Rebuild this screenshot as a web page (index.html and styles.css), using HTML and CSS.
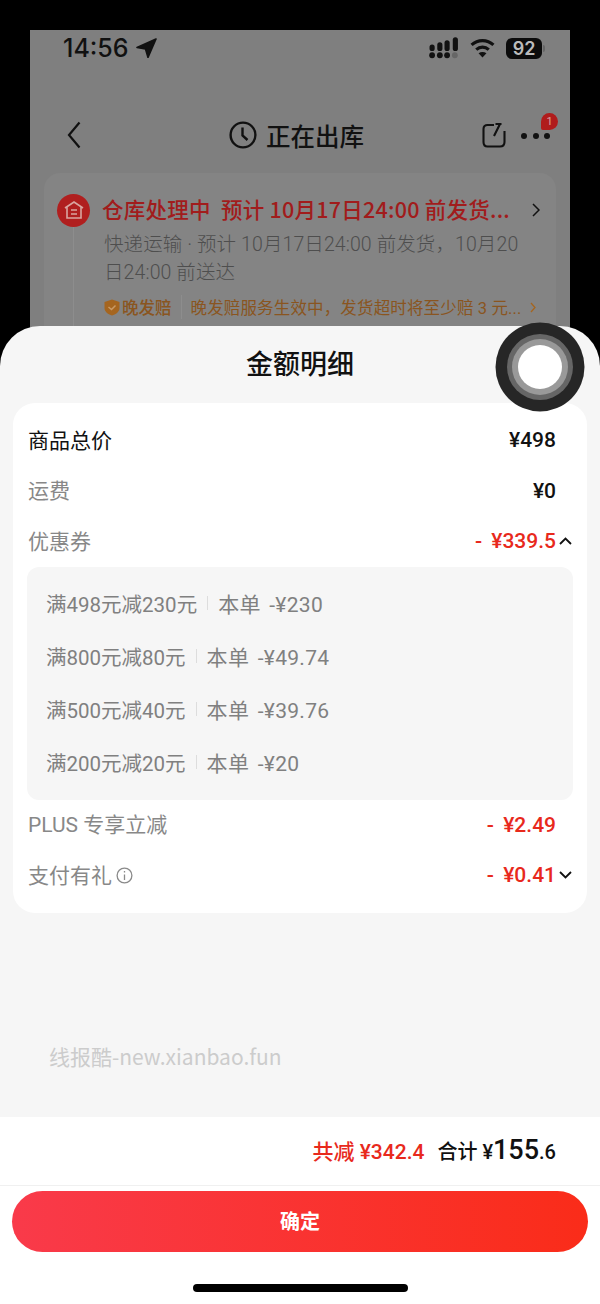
FILE: index.html

```html
<!DOCTYPE html>
<html lang="zh-CN">
<head>
    <meta charset="UTF-8" />
    <meta name="viewport" content="width=device-width, initial-scale=1" />
    <title>金额明细</title>
    <link rel="stylesheet" href="styles.css">
</head>
<body>
    <div class="page">
        <div class="backdrop">
            <div class="status-bar">
                <div class="status-time">
                    <span>14:56</span>
                    <svg width="21" height="20" viewBox="0 0 21 20"><path d="M20 1 L1 9.5 L9.5 11 L12 19.5 Z" fill="#111" stroke="#111" stroke-width="1.6" stroke-linejoin="round"/></svg>
                </div>
                <div class="status-icons">
                    <svg width="31" height="22" viewBox="0 0 30 21">
                        <g fill="#111">
                            <circle cx="3" cy="17.5" r="2.8"/><circle cx="10.5" cy="17.5" r="2.8"/><circle cx="17.5" cy="17.5" r="2.8"/>
                            <rect x="0.5" y="7" width="5" height="6.5" rx="2.5"/><rect x="8" y="5" width="5" height="8.5" rx="2.5"/><rect x="15" y="3" width="5" height="10.5" rx="2.5"/><rect x="23" y="0" width="5" height="13.5" rx="2.5"/>
                        </g>
                        <circle cx="25" cy="17.5" r="2.8" fill="#666"/>
                    </svg>
                    <svg class="wifi" width="25" height="20" viewBox="0 0 24 19" fill="none" stroke="#111" stroke-width="3">
                        <path d="M1.5 6.5 C7.5 1 16.5 1 22.5 6.5"/>
                        <path d="M6 11 C9.5 7.8 14.5 7.8 18 11"/>
                        <path d="M12 18.5 L8.2 14.6 C10.5 12.8 13.5 12.8 15.8 14.6 Z" fill="#111" stroke="none"/>
                    </svg>
                    <div class="battery">92</div>
                    <div class="battery-cap"></div>
                </div>
            </div>

            <div class="nav">
                <svg class="nav-back" width="14" height="28" viewBox="0 0 14 28" fill="none" stroke="#111" stroke-width="2.2"><path d="M12.5 1.5 L2 14 L12.5 26.5"/></svg>
                <div class="nav-title">
                    <svg width="28" height="28" viewBox="0 0 28 28" fill="none" stroke="#111" stroke-width="2.4"><circle cx="14" cy="14" r="12.4"/><path d="M13.5 6.5 V14.5 L18.5 19"/></svg>
                    <span>正在出库</span>
                </div>
                <div class="nav-actions">
                    <svg width="24" height="26" viewBox="0 0 24 26" fill="none" stroke="#111" stroke-width="2.1"><path d="M12 3 H5.5 C3 3 1.5 4.5 1.5 7 V20 C1.5 23 3 24.5 5.5 24.5 H18 C20.5 24.5 22.5 23 22.5 20 V9"/><path d="M12 14 L18 2 M13.5 2 H19.5"/></svg>
                    <div class="nav-more">
                        <i></i><i></i><i></i>
                        <span class="nav-badge">1</span>
                    </div>
                </div>
            </div>

            <div class="track">
                <div class="track-head">
                    <div class="track-icon">
                        <svg width="20" height="18" viewBox="0 0 20 18" fill="none" stroke="#d9a5a0" stroke-width="1.6"><path d="M1 7 L10 1 L19 7 M3 6 V17 H17 V6 M7 9 H13 M7 13 H13"/></svg>
                    </div>
                    <div class="track-title">仓库处理中&nbsp; 预计 10月17日24:00 前发货...</div>
                    <svg class="track-arrow" width="8" height="14" viewBox="0 0 8 14" fill="none" stroke="#111" stroke-width="1.5"><path d="M1 1 L7 7 L1 13"/></svg>
                </div>
                <div class="track-body">
                    <p class="track-text">快递运输 · 预计 10月17日24:00 前发货，10月20日24:00 前送达</p>
                    <div class="track-late">
                        <svg width="16" height="17" viewBox="0 0 16 17"><path d="M8 0.5 L15.5 3 V9 C15.5 13 11.5 15.5 8 16.5 C4.5 15.5 0.5 13 0.5 9 V3 Z" fill="#a5651f"/><path d="M4.5 8 L7.5 10.5 L11.5 6.5" fill="none" stroke="#c99a66" stroke-width="1.5"/></svg>
                        <span class="late-name">晚发赔</span>
                        <span class="late-text">晚发赔服务生效中，发货超时将至少赔 3 元...</span>
                        <svg width="6" height="11" viewBox="0 0 6 11" fill="none" stroke="#a5651f" stroke-width="1.3"><path d="M1 1 L5 5.5 L1 10"/></svg>
                    </div>
                </div>
            </div>
        </div>

        <div class="sheet">
            <h1 class="sheet-title">金额明细</h1>

            <div class="card">
                <div class="row">
                    <span class="row-label dark">商品总价</span>
                    <span class="row-value">¥498</span>
                </div>
                <div class="row">
                    <span class="row-label">运费</span>
                    <span class="row-value">¥0</span>
                </div>
                <div class="row">
                    <span class="row-label">优惠券</span>
                    <span class="row-value red">- ¥339.5</span>
                    <svg class="row-chevron" width="13" height="8" viewBox="0 0 13 8" fill="none" stroke="#111" stroke-width="1.8"><path d="M1 7 L6.5 1.5 L12 7"/></svg>
                </div>

                <div class="coupons">
                    <div class="coupon"><span>满498元减230元</span><i></i><span class="coupon-cut">本单 -¥230</span></div>
                    <div class="coupon"><span>满800元减80元</span><i></i><span class="coupon-cut">本单 -¥49.74</span></div>
                    <div class="coupon"><span>满500元减40元</span><i></i><span class="coupon-cut">本单 -¥39.76</span></div>
                    <div class="coupon"><span>满200元减20元</span><i></i><span class="coupon-cut">本单 -¥20</span></div>
                </div>

                <div class="row">
                    <span class="row-label">PLUS 专享立减</span>
                    <span class="row-value red">- ¥2.49</span>
                </div>
                <div class="row">
                    <span class="row-label">支付有礼</span>
                    <svg class="info" width="17" height="17" viewBox="0 0 17 17" fill="none" stroke="#8a8a8a" stroke-width="1.3"><circle cx="8.5" cy="8.5" r="7.4"/><path d="M8.5 7.5 V13 M8.5 4 V5.6"/></svg>
                    <span class="row-value red">- ¥0.41</span>
                    <svg class="row-chevron" width="13" height="8" viewBox="0 0 13 8" fill="none" stroke="#111" stroke-width="1.8"><path d="M1 1 L6.5 6.5 L12 1"/></svg>
                </div>
            </div>

            <div class="watermark">线报酷-new.xianbao.fun</div>

            <div class="total">
                <span class="total-cut">共减 ¥342.4</span>
                <span class="total-sum">合计 ¥<b>155</b><small>.6</small></span>
            </div>

            <div class="actions">
                <button class="confirm">确定</button>
                <div class="home-bar"></div>
            </div>
        </div>

        <svg class="touch" width="90" height="90" viewBox="0 0 90 90">
            <circle cx="45" cy="45" r="44.5" fill="#262626"/>
            <circle cx="45" cy="45" r="33" fill="#666"/>
            <circle cx="45" cy="45" r="28" fill="#999"/>
            <circle cx="45" cy="45" r="22" fill="#fff"/>
        </svg>
    </div>
</body>
</html>
```

FILE: styles.css

```css
* { box-sizing: border-box; }
html, body { margin: 0; padding: 0; }
body { font-family: Roboto, "Noto Sans CJK SC", sans-serif; background: #000; }
.page { position: relative; width: 600px; height: 1304px; overflow: hidden; background: #000; display: flex; flex-direction: column; }

/* dimmed order page behind the sheet */
.backdrop { margin: 30px 30px 0; height: 330px; flex: none; background: #7f7f7f; overflow: hidden; }
.status-bar { display: flex; justify-content: space-between; align-items: center; height: 36px; padding: 0 25px 0 33px; }
.status-time { display: flex; align-items: center; gap: 7px; font-family: Inter, sans-serif; font-size: 25px; font-weight: 500; color: #111; }
.status-icons { display: flex; align-items: center; }
.wifi { margin-left: 10px; }
.battery { margin-left: 11px; width: 36px; height: 21px; border-radius: 6px; background: #0c0c0c; color: #bbb; font-family: Inter, sans-serif; font-size: 18px; font-weight: 600; line-height: 21px; text-align: center; }
.battery-cap { width: 2px; height: 7px; margin-left: 1px; background: #666; border-radius: 0 2px 2px 0; }

.nav { display: grid; grid-template-columns: 1fr auto 1fr; align-items: center; height: 40px; margin-top: 49px; padding: 0 20px 0 37px; }
.nav-title { display: flex; align-items: center; gap: 9px; margin-right: 24px; font-family: "Noto Sans CJK SC", sans-serif; font-size: 24.5px; font-weight: 500; color: #111; }
.nav-actions { display: flex; align-items: center; gap: 15px; justify-self: end; }
.nav-more { position: relative; display: flex; gap: 5.5px; padding-top: 2px; }
.nav-more i { width: 6px; height: 6px; border-radius: 50%; background: #111; }
.nav-badge { position: absolute; right: -8px; top: -18px; width: 17px; height: 17px; border-radius: 9px 9px 9px 2px; background: #b01c1c; color: #d9a5a0; font-size: 11px; line-height: 17px; text-align: center; }

.track { margin: 18px 14px 0; height: 200px; padding: 20px 16px 0 13px; border-radius: 16px; background: #848484; }
.track-head { display: flex; align-items: center; height: 34px; }
.track-icon { width: 33px; height: 33px; flex: none; border-radius: 50%; background: #b01f1f; display: flex; align-items: center; justify-content: center; }
.track-title { flex: 1; margin-left: 12px; padding-bottom: 3px; font-family: "Noto Sans CJK SC", Roboto, sans-serif; font-size: 21.5px; font-weight: 500; color: #a11c1c; white-space: nowrap; letter-spacing: 0.25px; }
.track-arrow { flex: none; }
.track-body { margin-left: 16px; padding: 4px 0 0 30px; border-left: 1px solid #8d8d8d; height: 120px; }
.track-text { margin: 0; font-size: 19.5px; line-height: 28px; color: #4e4e4e; font-weight: 300; width: 420px; letter-spacing: 0.1px; }
.track-late { display: flex; align-items: center; margin-top: 8px; font-size: 16.5px; color: #8a5520; white-space: nowrap; width: 432px; }
.late-name { margin-left: 2px; padding-right: 9px; margin-right: 9px; font-weight: 500; border-right: 1px solid #8d8d8d; }
.late-text { flex: 1; letter-spacing: 0.15px; }

/* price sheet */
.sheet { position: relative; flex: 1; margin-top: -34px; border-radius: 40px 40px 0 0; background: #f6f6f6; display: flex; flex-direction: column; }
.sheet-title { margin: 0; height: 77px; line-height: 73px; text-align: center; font-family: "Noto Sans CJK SC", sans-serif; font-size: 27px; font-weight: 500; color: #111; }
.card { margin: 0 13px; height: 510px; padding: 12px 15px 0; background: #fff; border-radius: 22px; }
.row { display: flex; align-items: center; height: 50.5px; padding-right: 16px; position: relative; font-size: 21px; }
.row-label { padding-bottom: 3px; color: #888; }
.row-label.dark { color: #111; }
.row-value { margin-left: auto; color: #111; font-weight: 500; font-size: 21px; word-spacing: 4px; }
.row-value.red { color: #e8291c; }
.row-chevron { position: absolute; right: 0; top: 21px; }
.info { margin-left: 4px; }

.coupons { margin: 0 -1px; padding: 10px 0 11px 19px; height: 233px; background: #f6f6f6; border-radius: 12px; }
.coupon { display: flex; align-items: center; height: 53px; font-size: 20.5px; color: #808080; }
.coupon i { width: 1px; height: 14px; margin: 0 10px; background: #ddd; }
.coupon-cut { font-size: 21px; word-spacing: 3px; letter-spacing: 0.3px; }

.watermark { margin: 131px 0 0 49px; font-family: "Noto Sans CJK SC", "Noto Sans", sans-serif; font-size: 21px; color: #ccc; line-height: 24px; }
.total { margin-top: 49px; height: 69px; padding: 0 44px 3px 0; background: #fff; border-bottom: 1px solid #f0f0f0; display: flex; align-items: center; justify-content: flex-end; gap: 13px; font-size: 20px; }
.total-cut { color: #e8291c; font-weight: 500; font-size: 21px; }
.total-sum { color: #111; font-weight: 500; }
.total-sum b { font-size: 27px; font-weight: 500; }
.total-sum small { font-size: 20px; }

.actions { flex: 1; background: #fff; padding: 5px 12px 0; display: flex; flex-direction: column; align-items: center; }
.confirm { width: 100%; height: 61px; padding-bottom: 3px; border: none; border-radius: 31px; background: linear-gradient(90deg, #f93a4a, #fa2c19); color: #fff; font-family: "Noto Sans CJK SC", sans-serif; font-size: 20px; font-weight: 700; }
.home-bar { width: 215px; height: 8px; margin-top: 32px; border-radius: 4px; background: #000; }

.touch { position: absolute; left: 495px; top: 322px; }
```
